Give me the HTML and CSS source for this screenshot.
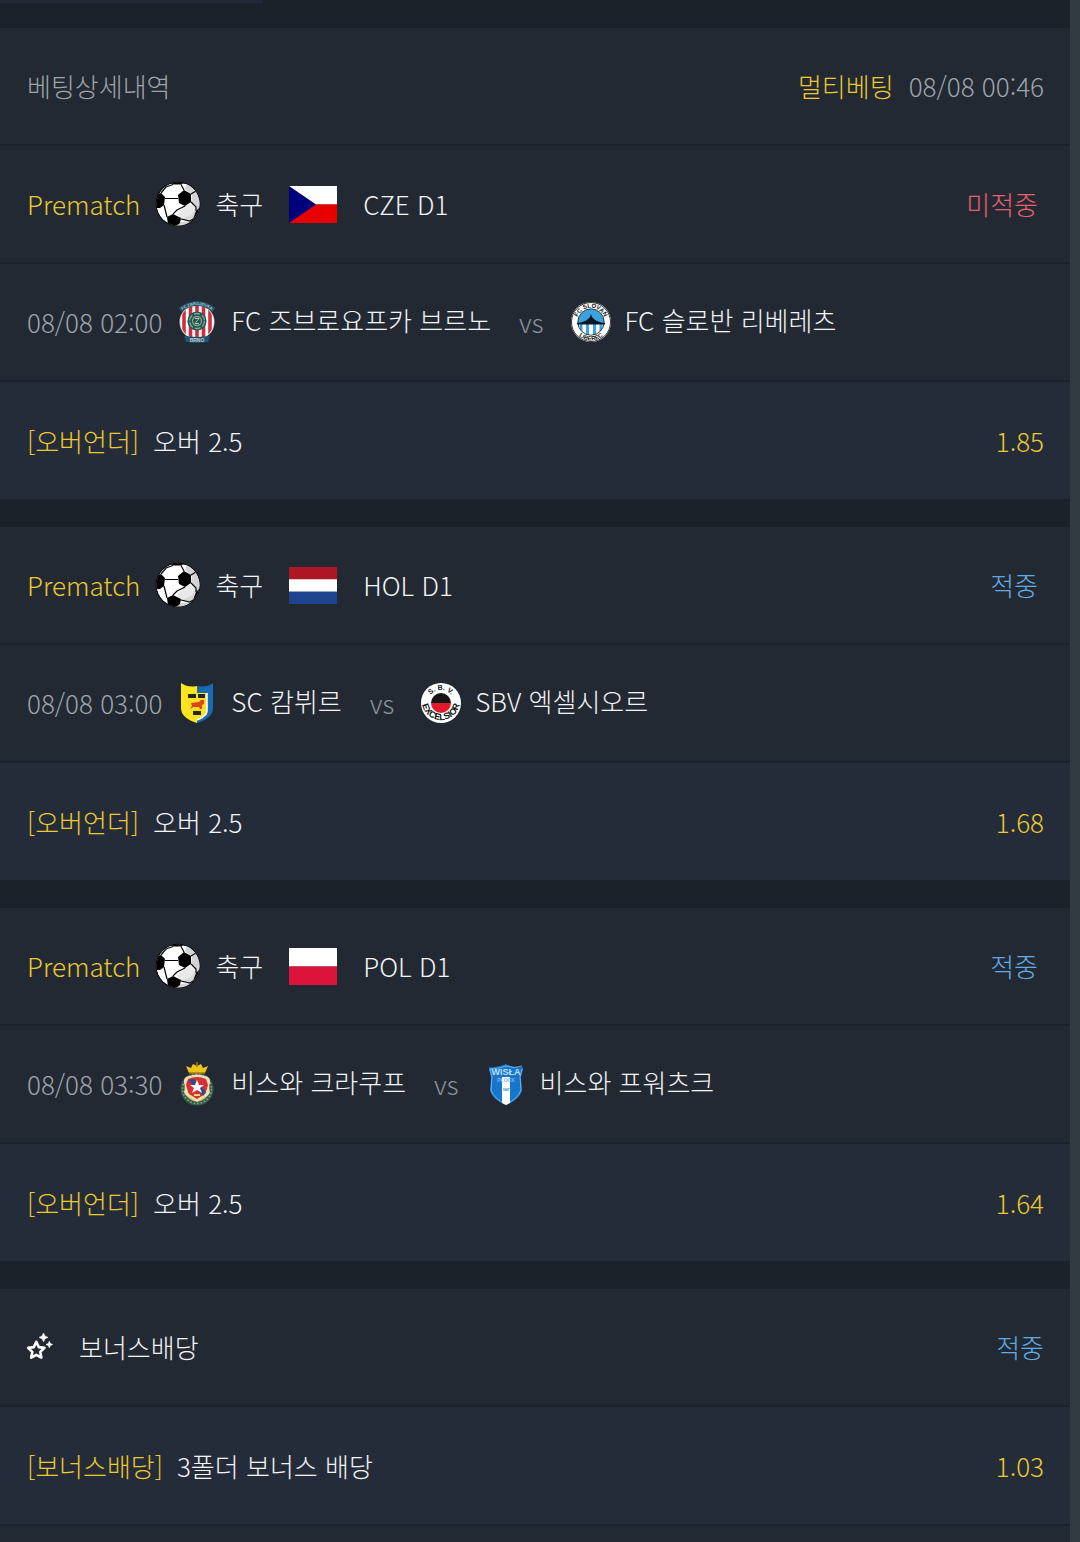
FILE: index.html
```html
<!DOCTYPE html>
<html lang="ko">
<head>
<meta charset="utf-8">
<meta name="viewport" content="width=device-width, initial-scale=1">
<title>베팅상세내역</title>
<link rel="stylesheet" href="styles.css">
</head>
<body>
<svg class="defs" aria-hidden="true">
  <symbol id="ball" viewBox="0 0 46 46">
    <clipPath id="ball-clip"><circle cx="23" cy="23" r="21.6"/></clipPath>
    <circle cx="23" cy="23" r="22.3" fill="#000"/>
    <g clip-path="url(#ball-clip)">
      <circle cx="23" cy="23" r="21.6" fill="#fff"/>
      <path d="M32 2 46 8V46H18L26 41 38 40 41 26 36 22 37 14 30 8Z" fill="#d4d4d4"/>
      <path d="M29 25 35 23 41 27 39 37 35 40 26 38 22 33Z" fill="#e9e9e9"/>
      <path d="M41 27 39 37 35 40 26 38 36 34Z" fill="#d8d8d8"/>
      <g fill="#000">
        <path d="M12 0 23 0 31 1 26 3.500 18 3.500Z"/>
        <path d="M23 14 29 9 36 13 36 21 30 25 24 22Z"/>
        <path d="M0 14 6 12 10 16 9 24 5 27 0 27Z"/>
        <path d="M12 36 18 33 26 37 25 42 20 46 13 44Z"/>
        <path d="M46 25 41 30 38 38 43 40Z"/>
      </g>
      <path d="M10 17.500H23M18 3.500 11 6 6 12M26 3.500 29 9M36 13 41 10M36 21 41 26 41 30M30 25 22 29 18 33M9 24 12 36M26 38 35 40 38 38" fill="none" stroke="#000" stroke-width="1.2"/>
    </g>
  </symbol>
</svg>

<div class="page">
  <main class="slip">
    <div class="tabs"><span class="tab-active"></span></div>

    <header class="row">
      <h1 class="muted">베팅상세내역</h1>
      <p class="end"><span class="gold">멀티베팅</span><time class="muted">08/08 00:46</time></p>
    </header>

    <section class="bet">
      <div class="row">
        <span class="gold kind">Prematch</span>
        <svg class="ball"><use href="#ball"/></svg>
        <span class="sport">축구</span>
        <svg class="flag" viewBox="0 0 48 36" preserveAspectRatio="none"><path fill="#fff" d="M0 0h48v18H0z"/><path fill="#e80000" d="M0 18h48v18H0z"/><path fill="#00007c" d="m0 0 27 18L0 36z"/></svg>
        <span>CZE D1</span>
        <strong class="result lose">미적중</strong>
      </div>
      <div class="row">
        <time class="muted when">08/08 02:00</time>
        <svg class="crest" viewBox="0 0 40 44">
          <clipPath id="brno"><circle cx="20" cy="22" r="16.5"/></clipPath>
          <circle cx="20" cy="22" r="17.500" fill="#d9dde0"/>
          <g clip-path="url(#brno)"><path fill="#fff" d="M3 5h34v34H3z"/><path stroke="#cf2f3d" stroke-width="3.6" d="M7 5v34M13.500 5v34M20 5v34M26.500 5v34M33 5v34"/></g>
          <path d="M3 10Q20-3 37 10" fill="none" stroke="#23566a" stroke-width="5"/>
          <path id="brno-arc" d="M4 11Q20-1 36 11" fill="none"/>
          <text font-size="4" fill="#a9c4c8" class="crest-text" text-anchor="middle"><textPath href="#brno-arc" startOffset="50%">FC ZBROJOVKA</textPath></text>
          <circle cx="20" cy="21" r="9.600" fill="#1c5362"/>
          <circle cx="20" cy="21" r="7.500" fill="none" stroke="#8ca878" stroke-width="1.4" stroke-dasharray="6 2"/>
          <circle cx="20" cy="21" r="4.500" fill="none" stroke="#8ca878" stroke-width="1.3"/>
          <path d="M18 18.500h4l-4 5h4" fill="none" stroke="#b9c09a"/>
          <path d="m7 36 13 1 13-1-2 6-11 1-11-1z" fill="#23566a"/>
          <text x="20" y="42" font-size="5" text-anchor="middle" fill="#bcd4d8" class="crest-text">BRNO</text>
        </svg>
        <span class="team">FC 즈브로요프카 브르노</span>
        <span class="versus">vs</span>
        <svg class="crest" viewBox="0 0 40 44">
          <circle cx="20" cy="22" r="20" fill="#fff"/>
          <circle cx="20" cy="22" r="19.5" fill="none" stroke="#333" stroke-width="1"/>
          <clipPath id="lib"><circle cx="20" cy="22" r="13"/></clipPath>
          <g clip-path="url(#lib)"><path fill="#3aa2dc" d="M6 8h28v15H6z"/><path fill="#fff" d="M6 23h28v13H6z"/><path stroke="#3aa2dc" stroke-width="3" d="M10 23v13M16.500 23v13M23.500 23v13M30 23v13"/></g>
          <circle cx="20" cy="22" r="13.200" fill="none" stroke="#111" stroke-width=".8"/>
          <path d="M6 23q8-1 11-4l2-2 1-3 1 3 2 2q3 3 11 4v1.500H6z" fill="#0b1726"/>
          <path id="lib-top" d="M5.800 22a14.200 14.200 0 0 1 28.400 0" fill="none"/>
          <path id="lib-bot" d="M1.500 22a18.500 18.500 0 0 0 37 0" fill="none"/>
          <g font-size="6" class="crest-text" fill="#111" text-anchor="middle"><text><textPath href="#lib-top" startOffset="50%">FC SLOVAN</textPath></text><text><textPath href="#lib-bot" startOffset="50%">LIBEREC</textPath></text></g>
        </svg>
        <span class="team">FC 슬로반 리베레츠</span>
      </div>
      <div class="row pick">
        <span class="gold">[오버언더]</span><span>오버 2.5</span>
        <span class="gold end">1.85</span>
      </div>
    </section>

    <section class="bet">
      <div class="row">
        <span class="gold kind">Prematch</span>
        <svg class="ball"><use href="#ball"/></svg>
        <span class="sport">축구</span>
        <svg class="flag" viewBox="0 0 48 36" preserveAspectRatio="none"><path fill="#ae1625" d="M0 0h48v12H0z"/><path fill="#fff" d="M0 12h48v12H0z"/><path fill="#1e448d" d="M0 24h48v12H0z"/></svg>
        <span>HOL D1</span>
        <strong class="result win">적중</strong>
      </div>
      <div class="row">
        <time class="muted when">08/08 03:00</time>
        <svg class="crest" viewBox="0 0 40 44">
          <path d="M4 2q7 5 16 3v37Q4 37 4 27z" fill="#ffe51e"/>
          <path d="M20 5q9 2 16-3v25q0 10-16 15z" fill="#176bb5"/>
          <path d="M10 12h20v18q0 5-10 9-10-4-10-9z" fill="#ffe21f"/>
          <path d="M20 39q10-4 10-9V12" fill="none" stroke="#fff" stroke-width="1.500"/>
          <path d="M11 13h8v4h-8zM21 13h7v4h-7zM16 30h8v4h-8z" fill="#282814"/>
          <path d="M27 19v4l-2 1v4h-2l-1-2h-5l-4 2 2-3-1-3 8-1 2-2z" fill="#e04320"/>
        </svg>
        <span class="team">SC 캄뷔르</span>
        <span class="versus">vs</span>
        <svg class="crest" viewBox="0 0 40 44">
          <circle cx="20" cy="22" r="20" fill="#fff"/>
          <path d="M10 22a10 10 0 0 1 20 0z" fill="#151515"/><path d="M10 22a10 10 0 0 0 20 0z" fill="#e11b2b"/>
          <path id="exc-top" d="M7 22a13 13 0 0 1 26 0" fill="none"/>
          <path id="exc-bot" d="M1 20a19 19 0 0 0 38 0" fill="none"/>
          <g class="crest-text" fill="#111" text-anchor="middle"><text font-size="7"><textPath href="#exc-top" startOffset="50%">S. B. V.</textPath></text><text font-size="9"><textPath href="#exc-bot" startOffset="50%">EXCELSIOR</textPath></text></g>
        </svg>
        <span class="team">SBV 엑셀시오르</span>
      </div>
      <div class="row pick">
        <span class="gold">[오버언더]</span><span>오버 2.5</span>
        <span class="gold end">1.68</span>
      </div>
    </section>

    <section class="bet">
      <div class="row">
        <span class="gold kind">Prematch</span>
        <svg class="ball"><use href="#ball"/></svg>
        <span class="sport">축구</span>
        <svg class="flag" viewBox="0 0 48 36" preserveAspectRatio="none"><path fill="#fff" d="M0 0h48v18H0z"/><path fill="#dc143c" d="M0 18h48v18H0z"/></svg>
        <span>POL D1</span>
        <strong class="result win">적중</strong>
      </div>
      <div class="row">
        <time class="muted when">08/08 03:30</time>
        <svg class="crest" viewBox="0 0 40 44">
          <circle cx="20" cy="27" r="14.500" fill="#d7c46a" stroke="#2f5f50" stroke-width="4"/>
          <circle cx="20" cy="27" r="14.500" fill="none" stroke="#a8a468" stroke-width="1.500" stroke-dasharray="1.500 2"/>
          <path d="m12 11-3-7 5 2 2-4 4 2 4-2 2 4 5-2-3 7z" fill="#edc51a"/>
          <path d="M20 0v5M12 11h16" stroke="#a97c0b" stroke-width="1.500"/>
          <path d="M12 14q8-3 16 0 6 1 5 7-2 5 0 9-1 4-6 5l-7 5-7-5q-5-1-6-5 2-4 0-9-1-6 5-7z" fill="#f2dfb3"/>
          <path d="M11 17q9-4 18 0l2 6q-2 7-3 9l-8 5-8-5q-1-2-3-9z" fill="#d92e36"/>
          <path d="m11 18 6-1 12 13-3 4z" fill="#2d4b8f"/>
          <path d="m20 18 2 5h5l-4 3 2 5-5-3-5 3 2-5-4-3h5z" fill="#fff"/>
          <path d="M17 33h6" stroke="#ffdc55" stroke-width="2"/>
        </svg>
        <span class="team">비스와 크라쿠프</span>
        <span class="versus">vs</span>
        <svg class="crest" viewBox="0 0 40 44">
          <path d="M3 5q9 1 17-3 8 4 17 3v3l-2 7 1 14q-3 9-16 14Q7 38 4 29l1-14-2-7z" fill="#1776ca"/>
          <path d="M4 7q8 0 16-3 8 3 16 0M4 7l2 8-1 13q3 9 15 14 12-5 15-14l-1-13 2-8" fill="none" stroke="#8bc1f0" stroke-width=".8"/>
          <path d="M16 15h8v26l-4 2-4-2z" fill="#fff"/>
          <g class="crest-text" text-anchor="middle"><text x="20" y="13" font-size="9" fill="#bfe0fb">WISŁA</text><text x="20" y="20" font-size="5" fill="#7db7ea">PŁOCK</text><text x="20" y="29" font-size="3" fill="#1776ca">1947</text></g>
        </svg>
        <span class="team">비스와 프워츠크</span>
      </div>
      <div class="row pick">
        <span class="gold">[오버언더]</span><span>오버 2.5</span>
        <span class="gold end">1.64</span>
      </div>
    </section>

    <section class="bet">
      <div class="row">
        <svg class="stars" viewBox="0 0 28 28">
          <path d="m10.300 8.800 2.500 5.300 5.700.8-4.200 4 1.100 5.700-5.100-2.800-5.100 2.800 1.100-5.700-4.200-4 5.700-.8z" fill="none" stroke="#fff" stroke-width="2.600" stroke-linejoin="round"/>
          <path d="m17.500 0 1.400 3 3 1.400-3 1.400-1.400 3-1.400-3-3-1.400 3-1.400zM23.300 8.200l1 2.300 2.300 1-2.300 1-1 2.300-1-2.300-2.300-1 2.300-1z" fill="#fff" stroke="#fff" stroke-width=".6"/>
        </svg>
        <span>보너스배당</span>
        <strong class="end win">적중</strong>
      </div>
      <div class="row pick">
        <span class="gold">[보너스배당]</span><span>3폴더 보너스 배당</span>
        <span class="gold end">1.03</span>
      </div>
    </section>
    <div class="rest"></div>
  </main>
  <div class="rail"></div>
</div>
</body>
</html>
```

FILE: styles.css
```css
* { box-sizing: border-box; }

body {
  margin: 0;
  background: #1c2229;
  color: #f2f4f6;
  font: 300 26px/38px "Noto Sans CJK KR", sans-serif;
}

h1, p { margin: 0; font: inherit; }
strong { font-weight: inherit; }
svg { display: block; flex: none; }
.defs { position: absolute; width: 0; height: 0; }

.page { display: flex; min-height: 100vh; }
.slip { display: flex; flex: 1; flex-direction: column; min-width: 0; }
.rail { width: 10px; background: #323a42; }

.tabs { height: 28px; }
.tab-active { display: block; width: 263px; height: 3px; background: #242b38; }

.row {
  display: flex;
  align-items: center;
  height: 118px;
  padding: 0 26px 0 27px;
  background: #222933;
  border-bottom: 2px solid #1c222c;
  white-space: nowrap;
}

.bet { margin-bottom: 28px; }
.bet .row:last-child { height: 117px; border-bottom: 0; }
.bet:last-of-type { margin-bottom: 2px; }
.rest { flex: 1; background: #222933; }

.pick { gap: 14px; }
.row.pick { background: #252c39; }

.end { display: flex; gap: 15px; margin-left: auto; }
.result { margin: 0 6px 0 auto; }

.muted { color: #9fa4ab; }
.gold { color: #ecc92f; }
.lose { color: #e8606c; }
.win { color: #62abe2; }

.ball { width: 46px; height: 46px; margin: 0 14px 0 15px; }
.flag { width: 48px; height: 37px; margin: 0 26px; }
.when { margin-right: 15px; }
.crest { width: 40px; height: 44px; margin-right: 14px; }
.team { padding-bottom: 4px; }
.versus { margin: 0 27px 0 28px; color: #8b9198; }
.stars { width: 28px; height: 28px; margin: 0 25px 0 -1px; }
.crest-text { font-family: "Liberation Sans", sans-serif; font-weight: 700; }
```
